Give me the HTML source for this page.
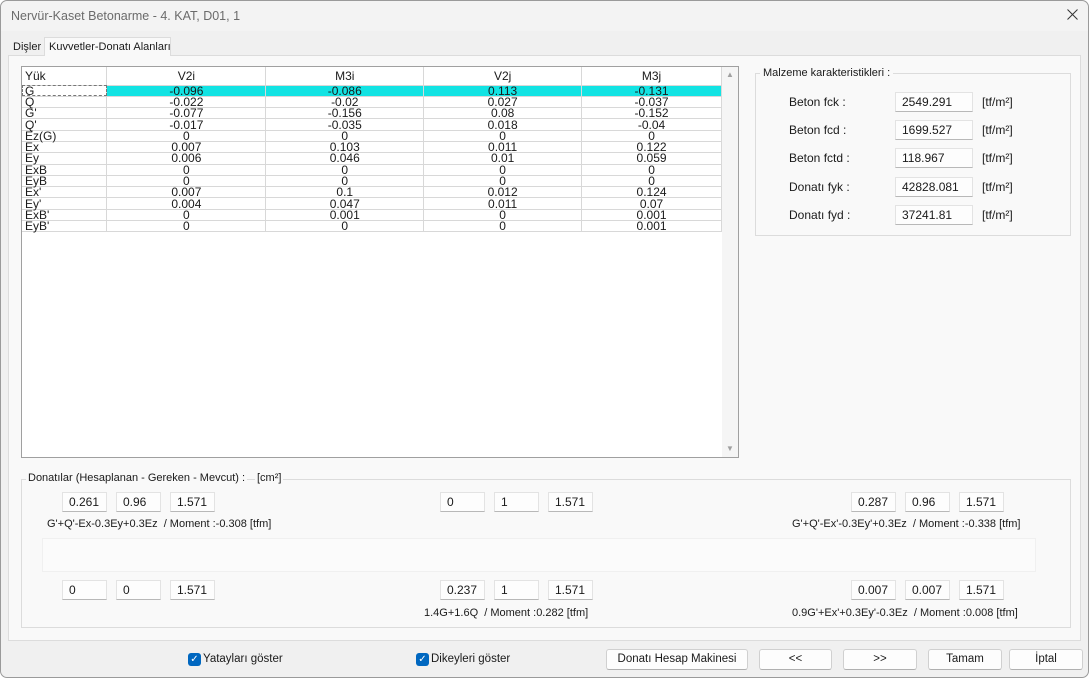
<!DOCTYPE html><html><head><style>
*{margin:0;padding:0;box-sizing:border-box}
body{width:1089px;height:678px;background:#fff;font-family:"Liberation Sans",sans-serif;font-size:12px;color:#1a1a1a;position:relative;overflow:hidden}
.a{position:absolute;white-space:nowrap}
.win{left:0;top:0;width:1089px;height:678px;border:1px solid #9a9a9a;border-radius:7px;background:#f0f0f0}
.tb{left:1px;top:1px;width:1087px;height:30px;background:#f3f3f3;border-radius:7px 7px 0 0}
.box{background:#fdfdfd;border:1px solid #e3e3e3;border-bottom:1px solid #b8b8b8;height:20px;line-height:18px;padding-left:6px;font-size:12px}
table{border-collapse:collapse;font-size:12px;line-height:10px}
td{border-right:1px solid #d8d8d8;border-bottom:1px solid #d8d8d8;text-align:center;height:11.3px;padding:0;white-space:nowrap}
td:first-child{text-align:left;padding-left:3px}
.btn{background:#fdfdfd;border:1px solid #d0d0d0;border-bottom-color:#b0b0b0;border-radius:3px;height:21px;line-height:19px;text-align:center;font-size:11.5px}
.cb{width:13px;height:13px;background:#0067c0;border-radius:3px;color:#fff;font-size:10px;line-height:13px;text-align:center}
</style></head><body>
<div class="a win"></div>
<div class="a tb"></div>
<div class="a" style="left:11px;top:9px;font-size:12.5px;color:#6b6b6b">Nervür-Kaset Betonarme - 4. KAT, D01, 1</div>
<svg class="a" style="left:1067px;top:9px" width="11" height="11"><path d="M0.5 0.5L10.5 10.5M10.5 0.5L0.5 10.5" stroke="#333" stroke-width="1"/></svg>
<div class="a" style="left:1px;top:31px;width:1087px;height:646px;background:#f0f0f0;border-radius:0 0 7px 7px"></div>
<div class="a" style="left:8px;top:55px;width:1073px;height:586px;background:#f9f9f9;border:1px solid #dcdcdc"></div>
<div class="a" style="left:13px;top:41px;font-size:11px">Dişler</div>
<div class="a" style="left:44px;top:37px;width:127px;height:19px;background:#f9f9f9;border:1px solid #dcdcdc;border-bottom:none;font-size:11px;padding:3px 0 0 4px">Kuvvetler-Donatı Alanları</div>
<div class="a" style="left:21px;top:66px;width:718px;height:392px;background:#fff;border:1px solid #a0a0a0"></div>
<div class="a" style="left:722px;top:67px;width:16px;height:390px;background:#f5f5f5"></div>
<div class="a" style="left:726px;top:70px;font-size:8px;color:#a0a0a0">▲</div>
<div class="a" style="left:726px;top:444px;font-size:8px;color:#a0a0a0">▼</div>
<table class="a" style="left:22px;top:67px;width:700px">
<colgroup><col style="width:85px"><col style="width:159px"><col style="width:158px"><col style="width:158px"><col style="width:140px"></colgroup>
<tr style="height:18px"><td style="height:18px;line-height:16px">Yük</td><td>V2i</td><td>M3i</td><td>V2j</td><td>M3j</td></tr>
<tr><td style="outline:1px dashed #777;outline-offset:-1px">G</td><td style="background:#12e3e3">-0.096</td><td style="background:#12e3e3">-0.086</td><td style="background:#12e3e3">0.113</td><td style="background:#12e3e3">-0.131</td></tr>
<tr><td>Q</td><td>-0.022</td><td>-0.02</td><td>0.027</td><td>-0.037</td></tr>
<tr><td>G'</td><td>-0.077</td><td>-0.156</td><td>0.08</td><td>-0.152</td></tr>
<tr><td>Q'</td><td>-0.017</td><td>-0.035</td><td>0.018</td><td>-0.04</td></tr>
<tr><td>Ez(G)</td><td>0</td><td>0</td><td>0</td><td>0</td></tr>
<tr><td>Ex</td><td>0.007</td><td>0.103</td><td>0.011</td><td>0.122</td></tr>
<tr><td>Ey</td><td>0.006</td><td>0.046</td><td>0.01</td><td>0.059</td></tr>
<tr><td>ExB</td><td>0</td><td>0</td><td>0</td><td>0</td></tr>
<tr><td>EyB</td><td>0</td><td>0</td><td>0</td><td>0</td></tr>
<tr><td>Ex'</td><td>0.007</td><td>0.1</td><td>0.012</td><td>0.124</td></tr>
<tr><td>Ey'</td><td>0.004</td><td>0.047</td><td>0.011</td><td>0.07</td></tr>
<tr><td>ExB'</td><td>0</td><td>0.001</td><td>0</td><td>0.001</td></tr>
<tr><td>EyB'</td><td>0</td><td>0</td><td>0</td><td>0.001</td></tr>
</table>
<div class="a" style="left:755px;top:73px;width:316px;height:163px;border:1px solid #dcdcdc"></div>
<div class="a" style="left:760px;top:67px;background:#f9f9f9;padding:0 3px;font-size:11px">Malzeme karakteristikleri :</div>
<div class="a" style="left:789px;top:95px">Beton fck :</div><div class="a box" style="left:895px;top:92px;width:78px">2549.291</div><div class="a" style="left:982px;top:95px">[tf/m²]</div>
<div class="a" style="left:789px;top:123px">Beton fcd :</div><div class="a box" style="left:895px;top:120px;width:78px">1699.527</div><div class="a" style="left:982px;top:123px">[tf/m²]</div>
<div class="a" style="left:789px;top:151px">Beton fctd :</div><div class="a box" style="left:895px;top:148px;width:78px">118.967</div><div class="a" style="left:982px;top:151px">[tf/m²]</div>
<div class="a" style="left:789px;top:180px">Donatı fyk :</div><div class="a box" style="left:895px;top:177px;width:78px">42828.081</div><div class="a" style="left:982px;top:180px">[tf/m²]</div>
<div class="a" style="left:789px;top:208px">Donatı fyd :</div><div class="a box" style="left:895px;top:205px;width:78px">37241.81</div><div class="a" style="left:982px;top:208px">[tf/m²]</div>
<div class="a" style="left:21px;top:479px;width:1050px;height:149px;border:1px solid #dcdcdc"></div>
<div class="a" style="left:26px;top:472px;background:#f9f9f9;padding:0 2px;font-size:11px">Donatılar (Hesaplanan - Gereken - Mevcut) :</div>
<div class="a" style="left:255px;top:472px;background:#f9f9f9;padding:0 2px;font-size:11px">[cm²]</div>
<div class="a" style="left:42px;top:538px;width:994px;height:34px;background:#fbfbfb;border:1px solid #f0f0f0"></div>
<div class="a box" style="left:62px;top:492px;width:45px">0.261</div><div class="a box" style="left:116px;top:492px;width:45px">0.96</div><div class="a box" style="left:170px;top:492px;width:45px">1.571</div>
<div class="a box" style="left:440px;top:492px;width:45px">0</div><div class="a box" style="left:494px;top:492px;width:45px">1</div><div class="a box" style="left:548px;top:492px;width:45px">1.571</div>
<div class="a box" style="left:851px;top:492px;width:45px">0.287</div><div class="a box" style="left:905px;top:492px;width:45px">0.96</div><div class="a box" style="left:959px;top:492px;width:45px">1.571</div>
<div class="a box" style="left:62px;top:580px;width:45px">0</div><div class="a box" style="left:116px;top:580px;width:45px">0</div><div class="a box" style="left:170px;top:580px;width:45px">1.571</div>
<div class="a box" style="left:440px;top:580px;width:45px">0.237</div><div class="a box" style="left:494px;top:580px;width:45px">1</div><div class="a box" style="left:548px;top:580px;width:45px">1.571</div>
<div class="a box" style="left:851px;top:580px;width:45px">0.007</div><div class="a box" style="left:905px;top:580px;width:45px">0.007</div><div class="a box" style="left:959px;top:580px;width:45px">1.571</div>
<div class="a" style="left:47px;top:518px;font-size:11px">G'+Q'-Ex-0.3Ey+0.3Ez&nbsp; / Moment :-0.308 [tfm]</div>
<div class="a" style="left:792px;top:518px;font-size:11px">G'+Q'-Ex'-0.3Ey'+0.3Ez&nbsp; / Moment :-0.338 [tfm]</div>
<div class="a" style="left:424px;top:607px;font-size:11px">1.4G+1.6Q&nbsp; / Moment :0.282 [tfm]</div>
<div class="a" style="left:792px;top:607px;font-size:11px">0.9G'+Ex'+0.3Ey'-0.3Ez&nbsp; / Moment :0.008 [tfm]</div>
<div class="a cb" style="left:188px;top:653px">✓</div><div class="a" style="left:203px;top:653px;font-size:11.5px">Yatayları göster</div>
<div class="a cb" style="left:416px;top:653px">✓</div><div class="a" style="left:431px;top:653px;font-size:11.5px">Dikeyleri göster</div>
<div class="a btn" style="left:606px;top:649px;width:142px">Donatı Hesap Makinesi</div>
<div class="a btn" style="left:759px;top:649px;width:73px">&lt;&lt;</div>
<div class="a btn" style="left:843px;top:649px;width:74px">&gt;&gt;</div>
<div class="a btn" style="left:928px;top:649px;width:74px">Tamam</div>
<div class="a btn" style="left:1009px;top:649px;width:74px">İptal</div>
</body></html>
